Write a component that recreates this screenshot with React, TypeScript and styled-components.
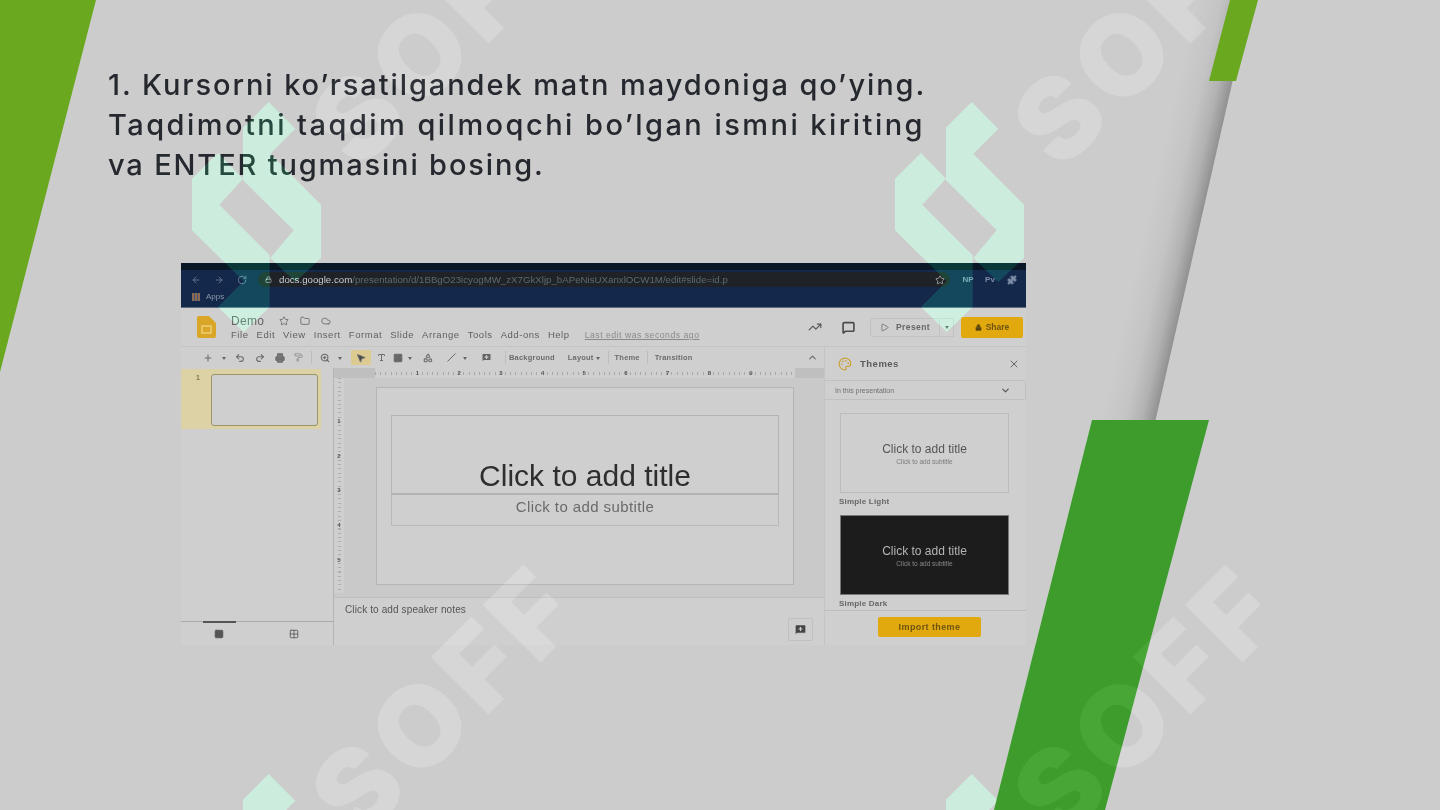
import React from "react";
import styled, { createGlobalStyle } from "styled-components";
import {
  ArrowLeft, ArrowRight, RotateCw, Lock, Star, Puzzle, Folder, Cloud, Plus, Undo2, Redo2, Printer,
  PaintRoller, ZoomIn, MousePointer2, Type, Image, Shapes, Slash, MessageSquarePlus, ChevronUp,
  ChevronDown, X, TrendingUp, MessageSquare, Play, Palette, Rows3, Grid2x2,
} from "lucide-react";

const GlobalStyle = createGlobalStyle`
  html, body { margin: 0; padding: 0; background: #cccccc; }
  body { font-family: "Liberation Sans", Arial, sans-serif; }
`;

const Page = styled.div`
  position: relative;
  isolation: isolate;
  width: 1440px;
  height: 810px;
  overflow: hidden;
  background: #cccccc;
  box-sizing: border-box;
  padding: 65px 0 0 108px;
`;

const Heading = styled.div`
  font-family: Inter, "Open Sans", sans-serif;
  font-size: 29px;
  font-weight: 500;
  line-height: 40px;
  color: #25282e;
  white-space: nowrap;
`;

const HeadLine = styled.div<{ $spacing: number }>`
  letter-spacing: ${(p) => p.$spacing}px;
`;

/* ---- slanted decoration ---- */
const LeftWedge = styled.div`
  position: absolute;
  left: 0;
  top: 0;
  width: 96px;
  height: 372px;
  background: #69a81f;
  clip-path: polygon(0 0, 100% 0, 0 100%);
  z-index: 3;
`;

const TopStripe = styled.div`
  position: absolute;
  left: 1209px;
  top: 0;
  width: 49px;
  height: 81px;
  background: #69a81f;
  clip-path: polygon(21px 0, 49px 0, 27px 81px, 0 81px);
  z-index: 3;
`;

const CastShadow = styled.div`
  position: absolute;
  left: 1196px;
  top: 0;
  width: 55px;
  height: 420px;
  transform: skewX(-12.8deg);
  transform-origin: top right;
  background: linear-gradient(
    to right,
    rgba(0, 0, 0, 0),
    rgba(0, 0, 0, 0.04) 45%,
    rgba(0, 0, 0, 0.13) 75%,
    rgba(0, 0, 0, 0.29)
  );
  z-index: 2;
`;

const GreenBar = styled.div`
  position: absolute;
  left: 994px;
  top: 420px;
  width: 215px;
  height: 390px;
  background: #3d9c2c;
  clip-path: polygon(98px 0, 215px 0, 111px 390px, 0 390px);
  z-index: 3;
`;

/* ---- watermark ---- */
const LogoMark = styled.svg<{ $x: number; $y: number }>`
  position: absolute;
  left: ${(p) => p.$x}px;
  top: ${(p) => p.$y}px;
  width: 130px;
  height: 231px;
  fill: rgb(0, 33, 17);
  mix-blend-mode: plus-lighter;
  z-index: 2;
`;

const WaterText = styled.div<{ $x: number; $y: number }>`
  position: absolute;
  left: ${(p) => p.$x}px;
  top: ${(p) => p.$y}px;
  transform: translate(-50%, -50%) rotate(-45deg);
  font-family: Inter, sans-serif;
  font-size: 112px;
  font-weight: 900;
  line-height: 112px;
  letter-spacing: 8px;
  color: rgb(10, 10, 10);
  mix-blend-mode: plus-lighter;
  white-space: nowrap;
  z-index: 4;
`;

/* ---- pasted screenshot ---- */
const Shot = styled.div`
  width: 845px;
  height: 382px;
  margin: 78px 0 0 73px;
  display: flex;
  flex-direction: column;
  background: #cfcfcf;
  filter: blur(0.7px);
  overflow: hidden;
  color: #555;
  font-family: "Liberation Sans", Arial, sans-serif;
`;

const Browser = styled.div`
  height: 45px;
  flex: none;
  background: #14284c;
  border-top: 7px solid #0a1727;
  box-sizing: border-box;
  border-bottom: 1px solid #5d6a80;
`;

const UrlRow = styled.div`
  height: 19px;
  display: flex;
  align-items: center;
  color: #6f7f99;
  padding-left: 3px;
`;

const NavIcon = styled.span<{ $w?: number }>`
  width: ${(p) => p.$w ?? 23}px;
  display: flex;
  justify-content: center;
  flex: none;
`;

const UrlBar = styled.div`
  width: 692px;
  height: 15px;
  margin: 0 3px 0 5px;
  flex: none;
  border-radius: 8px;
  background: #1f2327;
  display: flex;
  align-items: center;
  padding: 0 5px 0 7px;
  box-sizing: border-box;
  gap: 7px;
  font-size: 9.7px;
  color: #5d6a70;
  white-space: nowrap;
  overflow: hidden;
`;

const UrlText = styled.span`
  flex: 1;
`;

const Host = styled.span`
  color: #c9ccd0;
`;

const Profile = styled.span`
  font-size: 8px;
  font-weight: 700;
  color: #7d8da8;
`;

const Bookmarks = styled.div`
  display: flex;
  align-items: center;
  gap: 6px;
  padding: 3px 0 0 11px;
  font-size: 8px;
  color: #8d99a8;
`;

const AppsIcon = styled.span`
  width: 8px;
  height: 8px;
  background: repeating-linear-gradient(90deg, #8a6a52 0 2px, #4a5570 2px 3px);
`;

const DocHeader = styled.div`
  height: 39px;
  flex: none;
  display: flex;
  align-items: center;
  padding: 0 3px 0 16px;
  border-bottom: 1px solid #c4c4c0;
  box-sizing: border-box;
`;

const TitleBlock = styled.div`
  margin-left: 15px;
  display: flex;
  flex-direction: column;
  gap: 1px;
`;

const DocTitle = styled.div`
  display: flex;
  align-items: center;
  gap: 11px;
  font-size: 12px;
  letter-spacing: 0.3px;
  color: #666;
`;

const TitleName = styled.span`
  margin-right: 4px;
`;

const MenuBar = styled.div`
  display: flex;
  align-items: baseline;
  gap: 8px;
  font-size: 9.5px;
  letter-spacing: 0.55px;
  color: #5f5f5f;
  white-space: nowrap;
`;

const LastEdit = styled.span`
  margin-left: 7px;
  color: #8a8a8a;
  text-decoration: underline;
  font-size: 8.7px;
  letter-spacing: 0.5px;
`;

const HeaderActions = styled.div`
  margin-left: auto;
  display: flex;
  align-items: center;
  color: #555;
`;

const CommentSlot = styled.span`
  width: 38px;
  margin-left: 7px;
  display: flex;
  justify-content: center;
  color: #4a4a4a;
`;

const PresentButton = styled.div`
  height: 19px;
  width: 70px;
  margin-left: 3px;
  border: 1px solid #c2c2c2;
  border-radius: 3px 0 0 3px;
  box-sizing: border-box;
  display: flex;
  align-items: center;
  justify-content: center;
  gap: 7px;
  font-size: 8.5px;
  font-weight: 700;
  letter-spacing: 0.4px;
  color: #666;
`;

const PresentCaret = styled.div`
  height: 19px;
  width: 14px;
  border: 1px solid #c2c2c2;
  border-left: none;
  box-sizing: border-box;
  display: flex;
  align-items: center;
  justify-content: center;
`;

const ShareButton = styled.div`
  width: 62px;
  height: 21px;
  margin-left: 7px;
  border-radius: 2px;
  background: #e2a90e;
  display: flex;
  align-items: center;
  justify-content: center;
  gap: 4px;
  font-size: 8.5px;
  font-weight: 700;
  color: #6d5410;
`;

const Toolbar = styled.div`
  height: 21px;
  flex: none;
  display: flex;
  align-items: center;
  padding-left: 17px;
  font-size: 7.5px;
  font-weight: 700;
  color: #6c6c6c;
  white-space: nowrap;

  svg {
    stroke-width: 2.6;
  }
`;

const Tool = styled.span<{ $w?: number; $on?: boolean }>`
  width: ${(p) => p.$w ?? 20}px;
  height: 15px;
  flex: none;
  display: flex;
  align-items: center;
  justify-content: center;
  background: ${(p) => (p.$on ? "#dccb91" : "transparent")};
`;

const ToolEnd = styled(Tool)`
  margin: 0 204px 0 auto;
`;

const Caret = styled.span`
  width: 0;
  height: 0;
  border: 2.5px solid transparent;
  border-top: 3px solid #666;
  margin-top: 3px;
`;

const ToolSep = styled.span<{ $w?: number }>`
  width: 1px;
  height: 13px;
  flex: none;
  background: #bdbdbd;
  margin: 0 ${(p) => p.$w ?? 6}px;
`;

const ToolText = styled.span<{ $gap?: number }>`
  flex: none;
  margin-right: ${(p) => p.$gap ?? 0}px;
  letter-spacing: 0.2px;
`;

const Workspace = styled.div`
  flex: 1;
  min-height: 0;
  display: flex;
`;

const Filmstrip = styled.div`
  width: 153px;
  flex: none;
  border-right: 1px solid #b4b4b4;
  box-sizing: border-box;
  display: flex;
  flex-direction: column;
`;

const SlideRow = styled.div`
  width: 140px;
  height: 60px;
  margin-top: 1px;
  background: #dcd2a6;
  display: flex;
  padding: 5px 0 0 15px;
  box-sizing: border-box;
  font-size: 7px;
  font-weight: 700;
  color: #80744e;
`;

const Thumb = styled.div`
  width: 107px;
  height: 52px;
  margin-left: 11px;
  background: #cfcfcf;
  border: 1.5px solid #9a9468;
  border-radius: 3px;
  box-sizing: border-box;
`;

const FilmTabs = styled.div`
  margin-top: auto;
  height: 23px;
  flex: none;
  position: relative;
  border-top: 1px solid #aaa;
  display: flex;
  align-items: center;
  justify-content: space-around;
  color: #555;
  padding-right: 2px;
`;

const ActiveTab = styled.span`
  position: absolute;
  left: 22px;
  top: -1px;
  width: 33px;
  height: 2px;
  background: #555;
`;

const Editor = styled.div`
  width: 490px;
  flex: none;
  display: flex;
  flex-direction: column;
  position: relative;
`;

const RulerH = styled.div`
  height: 10px;
  flex: none;
  display: flex;
  background: #bfbfbf;
`;

const RulerScale = styled.div`
  margin: 0 29px 0 41px;
  flex: 1;
  padding-left: 2.5px;
  background-color: #cfcfcf;
  background-image: repeating-linear-gradient(90deg, #a9a9a9 0 1px, transparent 1px 5.2px);
  background-size: 100% 3px;
  background-position: center;
  background-repeat: no-repeat;
  display: flex;
  align-items: center;
  font-size: 6px;
  font-weight: 700;
  color: #555;
`;

const RulerNum = styled.span`
  width: 41.7px;
  flex: none;
  text-align: right;
  box-sizing: border-box;
`;

const CanvasRow = styled.div`
  flex: 1;
  min-height: 0;
  display: flex;
  background: #c9c9c9;
`;

const RulerV = styled.div`
  width: 10px;
  flex: none;
  margin-bottom: 4px;
  background-color: #cfcfcf;
  background-image: repeating-linear-gradient(180deg, #adadad 0 1px, transparent 1px 4.3px);
  background-size: 3px 100%;
  background-position: center;
  background-repeat: no-repeat;
  display: flex;
  flex-direction: column;
  align-items: center;
  gap: 28.7px;
  padding-top: 40px;
  box-sizing: border-box;
  font-size: 6px;
  font-weight: 700;
  color: #555;
`;

const SlideSheet = styled.div`
  width: 418px;
  height: 198px;
  margin: 9px 0 0 32px;
  background: #cfcfcf;
  border: 1.5px solid #b5b5b5;
  box-sizing: border-box;
  padding: 27px 14px 0;
  display: flex;
  flex-direction: column;
`;

const TitleBox = styled.div`
  height: 80px;
  border: 1px solid #b3b3b3;
  border-bottom: 2px solid #b3b3b3;
  box-sizing: border-box;
  display: flex;
  align-items: flex-end;
  justify-content: center;
  padding-bottom: 1px;
  font-size: 30px;
  line-height: 32px;
  color: #2e2e2e;
`;

const SubtitleBox = styled.div`
  height: 31px;
  border: 1px solid #b9b9b9;
  border-top: none;
  box-sizing: border-box;
  text-align: center;
  font-size: 15px;
  line-height: 24px;
  letter-spacing: 0.4px;
  color: #6a6a6a;
`;

const Notes = styled.div`
  height: 48px;
  flex: none;
  border-top: 1px solid #bfbfbf;
  box-sizing: border-box;
  display: flex;
  justify-content: space-between;
  padding: 6px 11px 0 11px;
  font-size: 10px;
  letter-spacing: 0.12px;
  color: #555;
  position: relative;
`;

const NotesButton = styled.span`
  width: 25px;
  height: 23px;
  margin-top: 14px;
  display: flex;
  align-items: center;
  justify-content: center;
  border: 1px solid #c0c0c0;
  border-radius: 2px;
  box-sizing: border-box;
  color: #444;
`;

const ThemePanel = styled.div`
  flex: 1;
  display: flex;
  flex-direction: column;
  border-left: 1px solid #c4c4c4;
  margin-top: -21px;
  background: #cfcfcf;
  z-index: 1;
`;

const ThemeHead = styled.div`
  height: 33px;
  flex: none;
  display: flex;
  align-items: center;
  padding: 0 6px 0 13px;
  font-size: 9.5px;
  font-weight: 700;
  letter-spacing: 0.5px;
  color: #5c5c5c;
  gap: 8px;
`;

const CloseSlot = styled.span`
  margin-left: auto;
  display: flex;
  color: #666;
`;

const ThemeSelect = styled.div`
  height: 20px;
  flex: none;
  border: 1px solid #c0c0c0;
  border-left: none;
  border-radius: 0 2px 2px 0;
  box-sizing: border-box;
  display: flex;
  align-items: center;
  justify-content: space-between;
  padding: 0 14px 0 10px;
  font-size: 7px;
  color: #707070;
`;

const ThemeList = styled.div`
  flex: 1;
  min-height: 0;
  overflow: hidden;
  padding: 13px 0 0 15px;
`;

const ThemeCard = styled.div<{ $dark?: boolean }>`
  width: 169px;
  height: 80px;
  box-sizing: border-box;
  border: 1px solid ${(p) => (p.$dark ? "#777" : "#bcbcbc")};
  background: ${(p) => (p.$dark ? "#1c1c1c" : "#cfcfcf")};
  color: ${(p) => (p.$dark ? "#b5b5b5" : "#555")};
  display: flex;
  flex-direction: column;
  align-items: center;
  padding-top: 28px;
  font-size: 12px;
  line-height: 14px;
`;

const ThemeSub = styled.span`
  font-size: 6.5px;
  line-height: 9px;
  margin-top: 1px;
  opacity: 0.7;
`;

const ThemeName = styled.div`
  height: 22px;
  font-size: 8px;
  font-weight: 700;
  line-height: 17px;
  letter-spacing: 0.2px;
  color: #666;
  margin-left: -1px;
`;

const ThemeFooter = styled.div`
  height: 35px;
  flex: none;
  border-top: 1px solid #bdbdbd;
  display: flex;
  justify-content: center;
  padding: 6px 0 0 8px;
  box-sizing: border-box;
`;

const ImportButton = styled.div`
  width: 103px;
  height: 20px;
  border-radius: 2px;
  background: #e2a90e;
  text-align: center;
  font-size: 9px;
  font-weight: 700;
  line-height: 20px;
  letter-spacing: 0.4px;
  color: #6d5410;
`;

const logos = [
  [192, 102],
  [895, 102],
  [192, 774],
  [895, 774],
];

const words = [
  [445, 29],
  [1147, 29],
  [445, 700],
  [1147, 700],
];

const menu = ["File", "Edit", "View", "Insert", "Format", "Slide", "Arrange", "Tools", "Add-ons", "Help"];

const App: React.FC = () => {
  return (
    <>
      <GlobalStyle />
      <Page>
        <Heading>
          <HeadLine $spacing={1.92}>1. Kursorni ko’rsatilgandek matn maydoniga qo’ying.</HeadLine>
          <HeadLine $spacing={2.46}>Taqdimotni taqdim qilmoqchi bo’lgan ismni kiriting</HeadLine>
          <HeadLine $spacing={1.85}>va ENTER tugmasini bosing.</HeadLine>
        </Heading>

        <Shot>
          <Browser>
            <UrlRow>
              <NavIcon><ArrowLeft size={10} /></NavIcon>
              <NavIcon><ArrowRight size={10} /></NavIcon>
              <NavIcon><RotateCw size={10} /></NavIcon>
              <UrlBar>
                <Lock size={7} color="#c9ccd0" />
                <UrlText>
                  <Host>docs.google.com</Host>/presentation/d/1BBgO23icyogMW_zX7GkXljp_bAPeNisUXanxlOCW1M/edit#slide=id.p
                </UrlText>
                <Star size={10} color="#aaa" />
              </UrlBar>
              <NavIcon $w={30}><Profile>NP</Profile></NavIcon>
              <NavIcon $w={14}><Profile>Pv</Profile></NavIcon>
              <NavIcon $w={30}><Puzzle size={10} fill="#7d8da8" /></NavIcon>
            </UrlRow>
            <Bookmarks>
              <AppsIcon />
              Apps
            </Bookmarks>
          </Browser>

          <DocHeader>
            <svg width="19" height="22" viewBox="0 0 19 22">
              <path d="M2 0h10l7 7v13a2 2 0 0 1-2 2H2a2 2 0 0 1-2-2V2a2 2 0 0 1 2-2z" fill="#d9a628" />
              <rect x="5" y="10" width="9" height="7" fill="none" stroke="#f0d27a" strokeWidth="1.4" />
            </svg>
            <TitleBlock>
              <DocTitle>
                <TitleName>Demo</TitleName>
                <Star size={10} />
                <Folder size={10} />
                <Cloud size={10} />
              </DocTitle>
              <MenuBar>
                {menu.map((item) => (
                  <span key={item}>{item}</span>
                ))}
                <LastEdit>Last edit was seconds ago</LastEdit>
              </MenuBar>
            </TitleBlock>
            <HeaderActions>
              <TrendingUp size={14} />
              <CommentSlot><MessageSquare size={13} strokeWidth={3} /></CommentSlot>
              <PresentButton>
                <Play size={9} />
                Present
              </PresentButton>
              <PresentCaret><Caret /></PresentCaret>
              <ShareButton>
                <Lock size={7} fill="#5a4510" />
                Share
              </ShareButton>
            </HeaderActions>
          </DocHeader>

          <Toolbar>
            <Tool><Plus size={10} /></Tool>
            <Tool $w={12}><Caret /></Tool>
            <Tool><Undo2 size={10} /></Tool>
            <Tool><Redo2 size={10} /></Tool>
            <Tool $w={19}><Printer size={10} fill="#777" /></Tool>
            <Tool $w={19}><PaintRoller size={9} color="#999" /></Tool>
            <ToolSep $w={3} />
            <Tool><ZoomIn size={10} /></Tool>
            <Tool $w={10}><Caret /></Tool>
            <Tool $w={6} />
            <Tool $on><MousePointer2 size={10} fill="#444" /></Tool>
            <Tool><Type size={9} /></Tool>
            <Tool $w={14}><Image size={10} fill="#666" /></Tool>
            <Tool $w={9}><Caret /></Tool>
            <Tool $w={28}><Shapes size={10} /></Tool>
            <Tool $w={18}><Slash size={9} /></Tool>
            <Tool $w={10}><Caret /></Tool>
            <Tool $w={32}><MessageSquarePlus size={11} fill="#666" color="#cfcfcf" /></Tool>
            <ToolSep $w={3} />
            <ToolText $gap={13}>Background</ToolText>
            <ToolText>Layout</ToolText>
            <Tool $w={8}><Caret /></Tool>
            <ToolSep $w={6} />
            <ToolText>Theme</ToolText>
            <ToolSep $w={7} />
            <ToolText>Transition</ToolText>
            <ToolEnd><ChevronUp size={11} /></ToolEnd>
          </Toolbar>

          <Workspace>
            <Filmstrip>
              <SlideRow>
                1
                <Thumb />
              </SlideRow>
              <FilmTabs>
                <ActiveTab />
                <Rows3 size={10} fill="#555" />
                <Grid2x2 size={10} />
              </FilmTabs>
            </Filmstrip>

            <Editor>
              <RulerH>
                <RulerScale>
                  {[1, 2, 3, 4, 5, 6, 7, 8, 9].map((n) => (
                    <RulerNum key={n}>{n}</RulerNum>
                  ))}
                </RulerScale>
              </RulerH>
              <CanvasRow>
                <RulerV>
                  <span>1</span>
                  <span>2</span>
                  <span>3</span>
                  <span>4</span>
                  <span>5</span>
                </RulerV>
                <SlideSheet>
                  <TitleBox>Click to add title</TitleBox>
                  <SubtitleBox>Click to add subtitle</SubtitleBox>
                </SlideSheet>
              </CanvasRow>
              <Notes>
                Click to add speaker notes
                <NotesButton><MessageSquarePlus size={13} fill="#444" color="#cfcfcf" /></NotesButton>
              </Notes>
            </Editor>

            <ThemePanel>
              <ThemeHead>
                <Palette size={14} color="#c9a23a" />
                Themes
                <CloseSlot><X size={12} /></CloseSlot>
              </ThemeHead>
              <ThemeSelect>
                In this presentation
                <ChevronDown size={11} color="#555" strokeWidth={2.6} />
              </ThemeSelect>
              <ThemeList>
                <ThemeCard>
                  Click to add title
                  <ThemeSub>Click to add subtitle</ThemeSub>
                </ThemeCard>
                <ThemeName>Simple Light</ThemeName>
                <ThemeCard $dark>
                  Click to add title
                  <ThemeSub>Click to add subtitle</ThemeSub>
                </ThemeCard>
                <ThemeName>Simple Dark</ThemeName>
              </ThemeList>
              <ThemeFooter>
                <ImportButton>Import theme</ImportButton>
              </ThemeFooter>
            </ThemePanel>
          </Workspace>
        </Shot>

        {logos.map(([x, y]) => (
          <LogoMark key={`${x}-${y}`} $x={x} $y={y} viewBox="0 0 130 231">
            <polygon points="76.7,0 103.3,26.7 78.3,51.7 129,102.7 129,156 103.3,180 78.3,156 101.7,128.3 51,78.3 51,25.7" />
            <polygon points="26,51 51,76.7 27.3,102.7 77.7,153.3 77.7,205 51.7,230 26,205 51.7,179.3 0,128.3 0,76.7" />
          </LogoMark>
        ))}
        <CastShadow />
        <LeftWedge />
        <TopStripe />
        <GreenBar />
        {words.map(([x, y]) => (
          <WaterText key={`${x}-${y}`} $x={x} $y={y}>SOFF</WaterText>
        ))}
      </Page>
    </>
  );
};

export default App;
